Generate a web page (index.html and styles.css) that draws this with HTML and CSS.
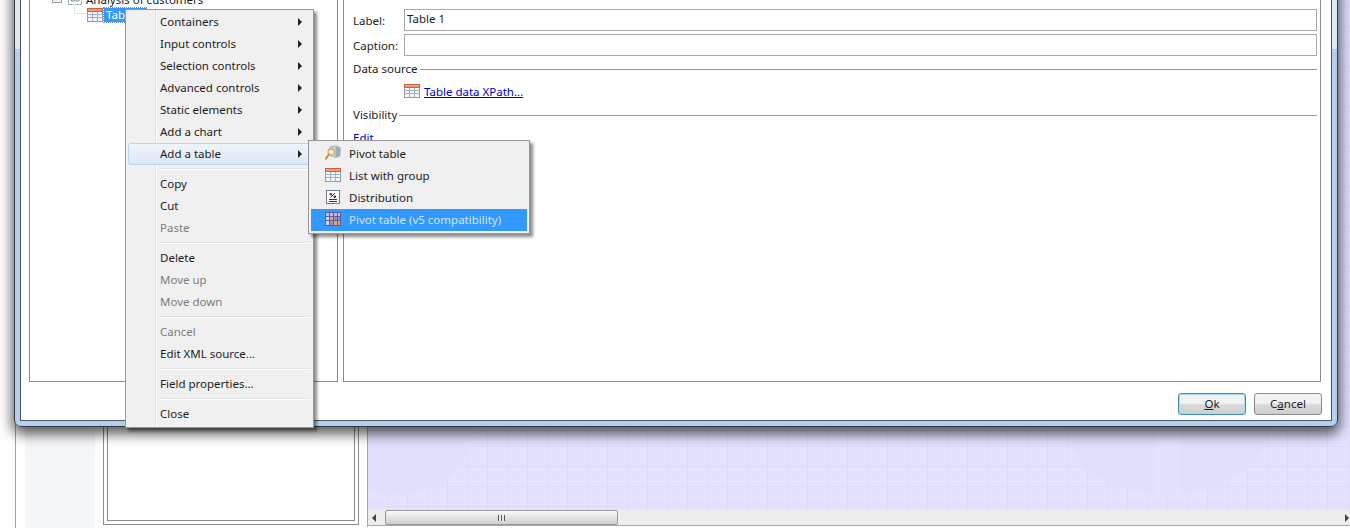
FILE: index.html
```html
<!DOCTYPE html>
<html lang="en">
<head>
<meta charset="utf-8">
<title>Field properties</title>
<link rel="stylesheet" href="styles.css">
</head>
<body>
<svg class="defs" width="0" height="0" aria-hidden="true">
  <symbol id="table" viewBox="0 0 16 14">
    <rect x="0.5" y="0.5" width="15" height="13" fill="#f4f7fb" stroke="#8c9bb0"/>
    <rect x="0.5" y="0.5" width="15" height="3" fill="#ee9a7c" stroke="#d0623c"/>
    <path d="M0 6.5h16M0 9.5h16M5.5 4v10M10.5 4v10" stroke="#9fb0c6" fill="none"/>
  </symbol>
</svg>

<div class="desk">
  <div class="strip"></div>
  <div class="rail"></div>
  <div class="gap"></div>
  <div class="panel-outer"><div class="panel-inner"></div></div>
  <div class="gap"></div>
  <div class="canvas-col">
    <div class="canvas"></div>
    <div class="hscroll">
      <span class="arrow arrow-left"></span>
      <span class="thumb"><span class="grip"></span></span>
      <span class="arrow arrow-right"></span>
    </div>
  </div>
</div>

<section class="window">
  <div class="client">
    <div class="panes">
      <div class="tree">
        <div class="tree-row tree-root">
          <span class="minus"></span>
          <svg class="form-icon" width="14" height="12" viewBox="0 0 14 12"><rect x="0.5" y="0.5" width="13" height="11" fill="#fff" stroke="#7a8796" stroke-dasharray="2 1"/><path d="M3 4h8v4H3z" fill="#dfe7f1" stroke="#7f93ad"/></svg>
          <span>Analysis of customers</span>
        </div>
        <div class="tree-row tree-child">
          <span class="branch"></span>
          <svg class="ico16" width="16" height="14"><use href="#table"/></svg>
          <span class="tree-sel">Table 1</span>
        </div>
      </div>
      <div class="props">
        <div class="field">
          <label class="field-label">Label:</label>
          <div class="input">Table 1</div>
        </div>
        <div class="field">
          <label class="field-label">Caption:</label>
          <div class="input"></div>
        </div>
        <div class="legend legend-data"><span>Data source</span><i></i></div>
        <div class="link-row">
          <svg class="ico16" width="16" height="14"><use href="#table"/></svg>
          <a class="link" href="#">Table data XPath...</a>
        </div>
        <div class="legend legend-vis"><span>Visibility</span><i></i></div>
        <div class="edit-row">Edit</div>
      </div>
    </div>
    <div class="buttons">
      <button class="btn btn-default"><u>O</u>k</button>
      <button class="btn">C<u>a</u>ncel</button>
    </div>
  </div>
</section>

<nav class="menu main-menu">
  <div class="item has-sub">Containers</div>
  <div class="item has-sub">Input controls</div>
  <div class="item has-sub">Selection controls</div>
  <div class="item has-sub">Advanced controls</div>
  <div class="item has-sub">Static elements</div>
  <div class="item has-sub">Add a chart</div>
  <div class="item has-sub hovered">Add a table</div>
  <div class="sep"></div>
  <div class="item">Copy</div>
  <div class="item">Cut</div>
  <div class="item off">Paste</div>
  <div class="sep"></div>
  <div class="item">Delete</div>
  <div class="item off">Move up</div>
  <div class="item off">Move down</div>
  <div class="sep"></div>
  <div class="item off">Cancel</div>
  <div class="item">Edit XML source...</div>
  <div class="sep"></div>
  <div class="item">Field properties...</div>
  <div class="sep"></div>
  <div class="item">Close</div>
</nav>

<nav class="menu sub-menu">
  <div class="sub-item">
    <svg class="sub-ico" width="18" height="18" viewBox="0 0 18 18">
      <path d="M6 2l6-1 5 2v9l-5 2-6-2z" fill="#c9d3dc" stroke="#8b97a3" stroke-width=".7"/>
      <path d="M12 1.500v12.500l5-2V3z" fill="#9fadba"/>
      <circle cx="7" cy="8" r="3.600" fill="#fdf3d8" fill-opacity=".8" stroke="#d8a24a" stroke-width="1.300"/>
      <path d="M4.500 10.500L1 15.500" stroke="#c98a2b" stroke-width="2" stroke-linecap="round"/>
    </svg>
    <span>Pivot table</span>
  </div>
  <div class="sub-item">
    <svg class="sub-ico" width="16" height="14"><use href="#table"/></svg>
    <span>List with group</span>
  </div>
  <div class="sub-item">
    <svg class="sub-ico" width="14" height="14" viewBox="0 0 14 14">
      <rect x="0.500" y="0.500" width="13" height="13" fill="#fff" stroke="#6e7d90"/>
      <path d="M4 3.500h1.500v1.500H4zM8 6h1.500v1.500H8zM9 3L4.500 7.500M3 9.500h8M3 11.500h8" fill="none" stroke="#222" stroke-width=".9"/>
    </svg>
    <span>Distribution</span>
  </div>
  <div class="sub-item selected">
    <svg class="sub-ico" width="16" height="14" viewBox="0 0 16 14">
      <rect x="0" y="0" width="16" height="14" fill="#5b5f9a"/>
      <path d="M1 1h3v3H1zM5 1h3v3H5zM9 1h3v3H9zM13 1h2v3h-2z" fill="#b8bfe2"/>
      <path d="M1 5h3v3H1zM1 9h3v4H1z" fill="#cfd4ef"/>
      <path d="M5 5h3v3H5zM13 9h2v4h-2zM9 9h3v4H9z" fill="#e6a46a"/>
      <path d="M9 5h3v3H9zM13 5h2v3h-2zM5 9h3v4H5z" fill="#8b8fd0"/>
    </svg>
    <span>Pivot table (v5 compatibility)</span>
  </div>
</nav>
</body>
</html>
```
FILE: styles.css
```css
* { box-sizing: border-box; }

html, body {
  margin: 0;
  width: 1350px;
  height: 528px;
  overflow: hidden;
  background: #fff;
  font-family: "Noto Sans", "Open Sans", sans-serif;
  font-size: 11.5px;
  color: #1c1c1c;
}

body { position: relative; }

.defs { position: absolute; }

/* application behind the dialog */
.desk {
  display: flex;
  height: 528px;
}
.strip {
  border-left: 1px solid #a0a0a0;
  margin-left: 15px;
  width: 10px;
}
.rail { width: 70px; background: #f5f6f8; }
.gap { width: 8px; }
.panel-outer {
  width: 256px;
  height: 525px;
  border: 1px solid #8c8c8c;
  padding: 3px;
  background: #fff;
}
.panel-inner {
  height: 100%;
  border: 1px solid #8c8c8c;
}
.canvas-col {
  flex: 1;
  height: 527px;
  display: flex;
  flex-direction: column;
  border-left: 1px solid #a8a8a8;
}
.canvas {
  height: 510px;
  flex: none;
  background-color: #e4e2ff;
  background-image:
    linear-gradient(#e4e2ff, #e4e2ff),
    radial-gradient(ellipse 75px 65px at 30px 430px, #e0e0fd 99%, transparent 100%),
    radial-gradient(ellipse 100px 65px at 799px 430px, #e0e0fd 99%, transparent 100%),
    linear-gradient(#dddaf9 1px, transparent 1px),
    linear-gradient(90deg, #dddaf9 1px, transparent 1px);
  background-size: 24px 70px, auto, auto, 20px 20px, 20px 20px;
  background-position: 787px 430px, 0 0, 0 0, 0 6px, -1px 0;
  background-repeat: no-repeat, no-repeat, no-repeat, repeat, repeat;
}
.hscroll {
  height: 16px;
  flex: none;
  background: #ededed;
  border-bottom: 1px solid #a8a8a8;
  display: flex;
  align-items: center;
  padding: 0 1px 0 4px;
}
.arrow {
  width: 0;
  height: 0;
  border-top: 4px solid transparent;
  border-bottom: 4px solid transparent;
}
.arrow-left { border-right: 4px solid #444; }
.arrow-right { border-left: 4px solid #444; margin-left: auto; }
.thumb {
  width: 233px;
  height: 15px;
  margin-left: 9px;
  border: 1px solid #9a9a9a;
  border-radius: 2px;
  background: linear-gradient(#f8f8f8, #cfcfcf);
  display: flex;
  align-items: center;
  justify-content: center;
}
.grip {
  width: 7px;
  height: 6px;
  background: repeating-linear-gradient(90deg, #555 0 1px, #eee 1px 3px);
}

/* dialog window */
.window {
  position: absolute;
  left: 14px;
  top: -20px;
  width: 1324px;
  height: 447px;
  padding: 5px;
  border: 1px solid #2e3b47;
  border-radius: 0 0 7px 7px;
  background: linear-gradient(#dce8f2 0 68px, #b5cfea 68px);
  box-shadow: 0 5px 13px 2px rgba(0, 0, 0, .65);
}
.client {
  height: 100%;
  background: #fff;
  border: 1px solid #4a5562;
  display: flex;
  flex-direction: column;
  padding: 0 10px 0 8px;
}
.panes {
  height: 395px;
  flex: none;
  display: flex;
  gap: 5px;
}
.tree {
  width: 309px;
  border: 1px solid #8c8c8c;
  padding-top: 4px;
}
.tree-row {
  display: flex;
  align-items: center;
  height: 14px;
}
.tree-root { padding-left: 22px; }
.minus {
  width: 10px;
  height: 8px;
  border: 1px solid #9aa3ad;
  background: #eceff2;
  margin-right: 6px;
}
.form-icon { margin-right: 4px; }
.tree-child { padding-left: 44px; margin-top: 2px; }
.branch {
  flex: none;
  align-self: flex-start;
  width: 13px;
  height: 10px;
  margin-top: -4px;
  border-left: 1px solid #e0e3e8;
  border-bottom: 1px solid #e0e3e8;
}
.tree-sel {
  background: #3399ff;
  color: #fff;
  padding: 0 2px;
  margin-left: 1px;
  outline: 1px dotted #6b8fb5;
  line-height: 14px;
}
.props {
  flex: 1;
  border: 1px solid #8c8c8c;
  padding: 21px 3px 0 9px;
}
.field {
  display: flex;
  align-items: center;
  height: 22px;
  margin-bottom: 3px;
}
.field-label { width: 51px; }
.input {
  flex: 1;
  height: 22px;
  border: 1px solid #aaaaaa;
  padding-left: 2px;
  line-height: 18px;
}
.legend {
  display: flex;
  align-items: center;
  gap: 2px;
  height: 16px;
}
.legend i {
  flex: 1;
  height: 1px;
  margin-top: 2px;
  background: #999;
}
.legend-data { margin-top: 4px; }
.legend-vis { margin-top: 7px; }
.link-row {
  display: flex;
  align-items: center;
  gap: 4px;
  height: 16px;
  margin-top: 7px;
  padding-left: 51px;
}
.link { color: #0000cc; }
.edit-row {
  color: #0000cc;
  height: 16px;
  margin-top: 8px;
  line-height: 16px;
}
.buttons {
  display: flex;
  justify-content: flex-end;
  gap: 8px;
  margin-top: 11px;
  margin-right: -1px;
}
.btn {
  width: 68px;
  height: 22px;
  font: inherit;
  color: inherit;
  padding: 0 0 2px;
  border: 1px solid #8a8a8a;
  border-radius: 3px;
  background: linear-gradient(#f2f2f2 0 45%, #d9d9d9 55%, #cfcfcf);
}
.btn-default {
  border-color: #3c8fb5;
  box-shadow: inset 0 0 0 1px #a6d8ee;
}

/* context menus */
.menu {
  position: absolute;
  background: #f0f0f0;
  border: 1px solid #979797;
  box-shadow: 3px 3px 3px rgba(0, 0, 0, .45);
  padding: 2px;
}
.main-menu {
  left: 125px;
  top: 9px;
  width: 189px;
  height: 419px;
  padding-top: 1px;
  background: linear-gradient(90deg, #f0f0f0 29px, #e2e3e3 29px, #e2e3e3 30px, #ffffff 30px, #ffffff 31px, #f0f0f0 31px);
}
.item {
  position: relative;
  height: 22px;
  line-height: 20px;
  padding-left: 31px;
  border: 1px solid transparent;
  border-radius: 3px;
}
.item.off { color: #7d7d7d; }
.item.has-sub::after {
  content: "";
  position: absolute;
  right: 8px;
  top: 6px;
  border-left: 4px solid #222;
  border-top: 4px solid transparent;
  border-bottom: 4px solid transparent;
}
.item.hovered {
  border-color: #b9d5ef;
  background: linear-gradient(#f0f5fb, #dce8f6);
}
.sep {
  height: 8px;
  margin-left: 30px;
  background: linear-gradient(#e2e3e3, #e2e3e3) 0 3px / 100% 1px no-repeat,
              linear-gradient(#fff, #fff) 0 4px / 100% 1px no-repeat;
}
.sub-menu {
  left: 308px;
  top: 140px;
  width: 222px;
  height: 94px;
}
.sub-item {
  display: flex;
  align-items: center;
  height: 22px;
  padding: 0 0 2px 14px;
}
.sub-ico { flex: none; width: 16px; margin-right: 8px; }
.sub-item.selected {
  background: #3399ff;
  color: #cfe6ff;
}
```
